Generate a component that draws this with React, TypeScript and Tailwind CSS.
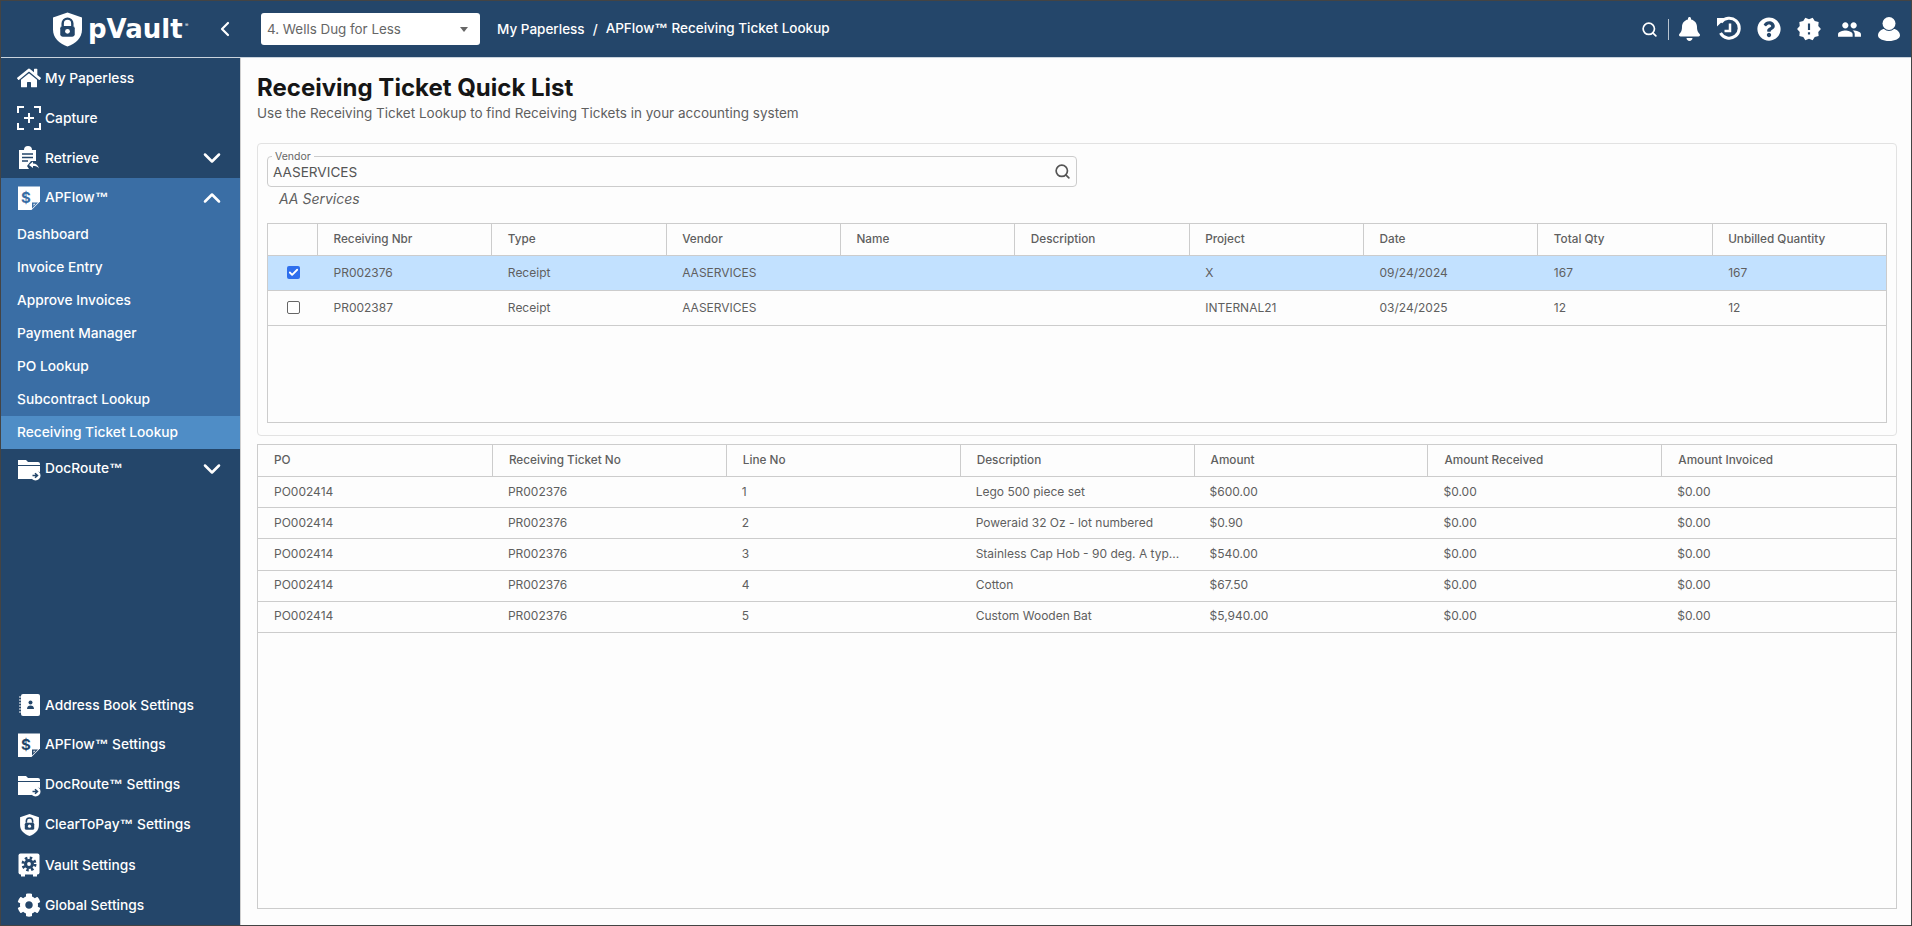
import { ReactNode } from 'react';
import { Check, ChevronDown, ChevronLeft, ChevronUp, Search } from 'lucide-react';
import { FaBell, FaCog, FaHome, FaQuestionCircle } from 'react-icons/fa';
import { MdNewReleases, MdPeople } from 'react-icons/md';

function CaptureIcon() {
  return (
    <svg viewBox="0 0 24 24" className="w-[24px] h-[24px]" fill="none" stroke="white" strokeWidth="2">
      <path d="M1 7V1h6M17 1h6v6M23 17v6h-6M7 23H1v-6" />
      <path d="M12 7v10M7 12h10" />
    </svg>
  );
}

function RetrieveIcon() {
  return (
    <svg viewBox="0 0 24 24" className="w-[24px] h-[24px]" fill="white">
      <path d="M2 4h5a4 4 0 0 1 8 0h4v11h-5l-4 5 2 3H2z" />
      <path d="M5 8h11M5 11.500h11M5 15h6" stroke="#24466a" strokeWidth="1.500" />
      <path d="M12 19l4-3.500v2c3 0 5 1.500 6 5-1.500-2-3-2.500-6-2.500v2z" />
    </svg>
  );
}

function DollarDocIcon({ color = '#24466a' }: { color?: string }) {
  return (
    <svg viewBox="0 0 24 24" className="w-[24px] h-[24px]">
      <path d="M1 0.500h22v15l-8.500 8.500H1z" fill="white" />
      <text x="9" y="16.500" fontSize="15" fontWeight="700" fontFamily="Inter, sans-serif" textAnchor="middle" fill={color}>$</text>
      <path d="M15 16.500h6l-6 6z" fill={color} />
      <path d="M16.500 17.800h2l-2 2z" fill="white" />
    </svg>
  );
}

function FolderArrowIcon() {
  return (
    <svg viewBox="0 0 24 24" className="w-[24px] h-[24px]">
      <path d="M1 3h8l2 2h10a2 2 0 0 1 2 2v1H1z" fill="white" />
      <path d="M1 9h22v6a6 6 0 0 0-8 7H1z" fill="white" />
      <circle cx="18.500" cy="18.500" r="5" fill="white" />
      <path d="M15.500 18.500h4M18 16.200l2.500 2.300-2.500 2.300" stroke="#24466a" strokeWidth="1.500" fill="none" />
    </svg>
  );
}

function AddressBookIcon() {
  return (
    <svg viewBox="0 0 24 24" className="w-[24px] h-[24px]">
      <rect x="4" y="1" width="19" height="22" rx="2" fill="white" />
      <path d="M2 4h3M2 7h3M2 10h3M2 13h3M2 16h3M2 19h3" stroke="white" strokeWidth="1" />
      <circle cx="13.500" cy="9.500" r="2" fill="#24466a" />
      <path d="M10 16c0-2.500 1.500-3.500 3.500-3.500S17 13.500 17 16z" fill="#24466a" />
    </svg>
  );
}

function ShieldLockIcon({ size, color }: { size: string; color: string }) {
  return (
    <svg viewBox="0 0 24 28" className={size}>
      <path d="M12 0l12 4v10c0 7-5 11.500-12 14C5 25.500 0 21 0 14V4z" fill="white" />
      <path d="M8 11V9a4 4 0 0 1 8 0v2" stroke={color} strokeWidth="2" fill="none" />
      <rect x="6" y="11" width="12" height="9" rx="2" fill={color} />
      <circle cx="12" cy="15.500" r="2" fill="white" />
    </svg>
  );
}

function VaultIcon() {
  return (
    <svg viewBox="0 0 24 24" className="w-[24px] h-[24px]">
      <rect x="1.500" y="0.500" width="21" height="21" rx="2" fill="white" />
      <path d="M4 21h4v2.500H4zM16 21h4v2.500h-4z" fill="white" />
      <circle cx="12" cy="11" r="6" fill="none" stroke="#24466a" strokeWidth="3" strokeDasharray="2.400 2.312" />
      <circle cx="12" cy="11" r="5" fill="#24466a" />
      <circle cx="12" cy="11" r="1.900" fill="white" />
    </svg>
  );
}

function HistoryIcon() {
  return (
    <svg viewBox="0 0 26 26" className="w-[26px] h-[26px]" fill="none" stroke="white">
      <path d="M5 6.500A10 10 0 1 1 4.500 17" strokeWidth="3" />
      <path d="M1 2h9L1 10.500z" fill="white" stroke="none" />
      <path d="M14 7.500V15H8.500" strokeWidth="2.500" />
    </svg>
  );
}

function UserIcon() {
  return (
    <svg viewBox="0 0 22 24" className="w-[22px] h-[24px]" fill="white">
      <circle cx="11" cy="6.500" r="6.500" />
      <path d="M0 18.500C0 14.500 4 12 6 12c1.500 1.300 3 2 5 2s3.500-.7 5-2c2 0 6 2.500 6 6.500 0 3-5 5.500-11 5.500S0 21.500 0 18.500z" />
    </svg>
  );
}

// the product names carry a larger trademark sign than Inter's
function ProductLabel({ text }: { text: string }) {
  const [name, rest] = text.split('™');
  if (rest === undefined) return <>{text}</>;
  return (
    <>
      {name}
      <span className="font-['Liberation_Sans',sans-serif] font-bold">™</span>
      {rest}
    </>
  );
}

function NavItem({ icon, label, right, active }: { icon: ReactNode; label: string; right?: ReactNode; active?: boolean }) {
  return (
    <div className={`h-[40px] flex items-center pl-[16px] pr-[14px] text-[13.750px] font-medium text-white ${active ? 'bg-[#3a6ea5]' : ''}`}>
      <span className="w-[24px] h-[24px] flex items-center justify-center shrink-0 mr-[4px]">{icon}</span>
      <span className="flex-1"><ProductLabel text={label} /></span>
      {right}
    </div>
  );
}

const apflowLinks = ['Dashboard', 'Invoice Entry', 'Approve Invoices', 'Payment Manager', 'PO Lookup', 'Subcontract Lookup', 'Receiving Ticket Lookup'];

function Sidebar() {
  return (
    <aside className="w-[239px] shrink-0 bg-[#24466a] flex flex-col justify-between">
      <div>
        <NavItem icon={<FaHome className="w-[24px] h-[24px] text-white" />} label="My Paperless" />
        <NavItem icon={<CaptureIcon />} label="Capture" />
        <NavItem icon={<RetrieveIcon />} label="Retrieve" right={<ChevronDown className="w-[28px] h-[28px] text-white" strokeWidth={2.2} />} />
        <NavItem icon={<DollarDocIcon color="#3a6ea5" />} label="APFlow™" right={<ChevronUp className="w-[28px] h-[28px] text-white" strokeWidth={2.2} />} active />
        {apflowLinks.map((link) => (
          <div
            key={link}
            className={`h-[33px] flex items-center pl-[16px] pb-[1px] text-[13.750px] font-medium text-white ${link === 'Receiving Ticket Lookup' ? 'bg-[#4f8dc6]' : 'bg-[#3a6ea5]'}`}
          >
            {link}
          </div>
        ))}
        <NavItem icon={<FolderArrowIcon />} label="DocRoute™" right={<ChevronDown className="w-[28px] h-[28px] text-white" strokeWidth={2.2} />} />
      </div>
      <div>
        <NavItem icon={<AddressBookIcon />} label="Address Book Settings" />
        <NavItem icon={<DollarDocIcon />} label="APFlow™ Settings" />
        <NavItem icon={<FolderArrowIcon />} label="DocRoute™ Settings" />
        <NavItem icon={<ShieldLockIcon size="w-[19px] h-[22px]" color="#24466a" />} label="ClearToPay™ Settings" />
        <NavItem icon={<VaultIcon />} label="Vault Settings" />
        <NavItem icon={<FaCog className="w-[24px] h-[24px] text-white" />} label="Global Settings" />
      </div>
    </aside>
  );
}

function TopBar() {
  return (
    <header className="h-[57px] shrink-0 bg-[#24466a] border-b border-[#c9d3dd] flex items-center text-white">
      <div className="w-[260px] shrink-0 flex items-center pl-[52px]">
        <ShieldLockIcon size="w-[29px] h-[35px]" color="#24466a" />
        <span className="ml-[6px] w-[97px] text-[26px] leading-none font-bold font-['DejaVu_Sans',sans-serif] whitespace-nowrap">pVault</span>
        <span className="text-[5px] self-start mt-[10px] w-[5px]">®</span>
        <ChevronLeft className="ml-[23px] w-[24px] h-[24px]" strokeWidth={2.2} />
      </div>
      <div className="w-[219px] h-[32px] bg-white rounded-[3px] flex items-center pl-[6px] pr-[12px] text-[13.400px] text-[#666666]">
        <span className="flex-1">4. Wells Dug for Less</span>
        <span className="w-0 h-0 border-x-[4px] border-x-transparent border-t-[5px] border-t-[#666666]" />
      </div>
      <nav className="ml-[17px] flex items-center text-[13.500px] font-medium gap-[8px]">
        <span>My Paperless</span>
        <span>/</span>
        <span><ProductLabel text="APFlow™ Receiving Ticket Lookup" /></span>
      </nav>
      <div className="ml-auto flex items-center pr-[2px]">
        <Search className="w-[17px] h-[17px]" strokeWidth={2.4} />
        <span className="w-px h-[21px] bg-[#b8c4d0] ml-[10px]" />
        <span className="w-[40px] flex justify-center"><FaBell className="w-[23px] h-[24px]" /></span>
        <span className="w-[40px] flex justify-center"><HistoryIcon /></span>
        <span className="w-[40px] flex justify-center"><FaQuestionCircle className="w-[24px] h-[24px]" /></span>
        <span className="w-[40px] flex justify-center"><MdNewReleases className="w-[26px] h-[26px]" /></span>
        <span className="w-[40px] flex justify-center"><MdPeople className="w-[25px] h-[25px]" /></span>
        <span className="w-[40px] flex justify-center"><UserIcon /></span>
      </div>
    </header>
  );
}

const receivingColumns = ['Receiving Nbr', 'Type', 'Vendor', 'Name', 'Description', 'Project', 'Date', 'Total Qty', 'Unbilled Quantity'];

const receivingRows = [
  { id: 'PR002376', type: 'Receipt', vendor: 'AASERVICES', project: 'X', date: '09/24/2024', total: '167', unbilled: '167', checked: true },
  { id: 'PR002387', type: 'Receipt', vendor: 'AASERVICES', project: 'INTERNAL21', date: '03/24/2025', total: '12', unbilled: '12', checked: false },
];

const lineColumns = ['PO', 'Receiving Ticket No', 'Line No', 'Description', 'Amount', 'Amount Received', 'Amount Invoiced'];

const lineRows = [
  ['1', 'Lego 500 piece set', '$600.00'],
  ['2', 'Poweraid 32 Oz - lot numbered', '$0.90'],
  ['3', 'Stainless Cap Hob - 90 deg. A typ...', '$540.00'],
  ['4', 'Cotton', '$67.50'],
  ['5', 'Custom Wooden Bat', '$5,940.00'],
];

function ReceivingTable() {
  const grid = 'grid grid-cols-[49px_repeat(9,minmax(0,1fr))]';
  return (
    <div className="mt-[36px] h-[200px] border border-[#cccccc] text-[12px] text-[#5f5f5f]">
      <div className={`${grid} h-[32px] border-b border-[#cccccc] text-[11.750px] font-medium`}>
        <div />
        {receivingColumns.map((col) => (
          <div key={col} className="flex items-center pl-[15.500px] border-l border-[#cccccc]">{col}</div>
        ))}
      </div>
      {receivingRows.map((row) => (
        <div key={row.id} className={`${grid} h-[35px] border-b border-[#cccccc] ${row.checked ? 'bg-[#c2e1ff]' : ''}`}>
          <div className="flex items-center justify-center pb-[1px] pl-[1px]">
            {row.checked ? (
              <span className="w-[13px] h-[13px] rounded-[2px] bg-[#2f6fed] flex items-center justify-center">
                <Check className="w-[11px] h-[11px] text-white" strokeWidth={4} />
              </span>
            ) : (
              <span className="w-[13px] h-[13px] rounded-[2px] border border-[#666666] bg-white" />
            )}
          </div>
          {[row.id, row.type, row.vendor, '', '', row.project, row.date, row.total, row.unbilled].map((value, idx) => (
            <div key={idx} className="flex items-center pl-[16.500px] pb-[1px]">{value}</div>
          ))}
        </div>
      ))}
    </div>
  );
}

function LinesTable() {
  const grid = 'grid grid-cols-[repeat(6,233.900px)_minmax(0,1fr)]';
  return (
    <div className="mt-[8px] flex-1 border border-[#cccccc] text-[12px] text-[#5f5f5f]">
      <div className={`${grid} h-[32px] border-b border-[#cccccc] text-[11.750px] font-medium`}>
        {lineColumns.map((col, idx) => (
          <div key={col} className={`flex items-center pl-[16px] ${idx > 0 ? 'border-l border-[#cccccc]' : ''}`}>{col}</div>
        ))}
      </div>
      {lineRows.map(([line, description, amount]) => (
        <div key={line} className={`${grid} h-[31.200px] border-b border-[#cccccc]`}>
          {['PO002414', 'PR002376', line, description, amount, '$0.00', '$0.00'].map((value, idx) => (
            <div key={idx} className="flex items-center pl-[16px] pb-[1px] whitespace-nowrap">{value}</div>
          ))}
        </div>
      ))}
    </div>
  );
}

export default function App() {
  return (
    <div className="h-screen w-full flex flex-col bg-[#fdfdfd] border-t border-x-[1px] border-b border-[#444444] overflow-hidden font-['Inter',sans-serif]">
      <TopBar />
      <div className="flex-1 flex min-h-0">
        <Sidebar />
        <main className="flex-1 flex flex-col min-w-0 border-l border-[#cfcfcf] pl-[16px] pr-[14px] pb-[16px] pt-[15px]">
          <h1 className="text-2xl leading-[30px] font-bold text-[#161616]">Receiving Ticket Quick List</h1>
          <p className="text-[13.500px] leading-[20px] text-[#5f5f5f]">
            Use the Receiving Ticket Lookup to find Receiving Tickets in your accounting system
          </p>

          <section className="mt-[20px] h-[293px] shrink-0 border border-[#e2e2e2] rounded-[4px] pt-[12px] px-[9px]">
            <div className="relative w-[810px] h-[31px] border border-[#cccccc] rounded-[4px] flex items-center pl-[5px] pr-[5px] text-[13.600px] text-[#555555]">
              <span className="absolute left-[4px] -top-[6px] bg-[#fdfdfd] px-[3px] text-[10.500px] leading-[12px] text-[#666666]">Vendor</span>
              <span className="flex-1 pt-[1px]">AASERVICES</span>
              <Search className="w-[17px] h-[17px] text-[#555555]" strokeWidth={2.4} />
            </div>
            <p className="absolute ml-[12px] mt-[3px] text-sm leading-[17px] italic text-[#5f5f5f]">AA Services</p>
            <ReceivingTable />
          </section>

          <LinesTable />
        </main>
      </div>
    </div>
  );
}
